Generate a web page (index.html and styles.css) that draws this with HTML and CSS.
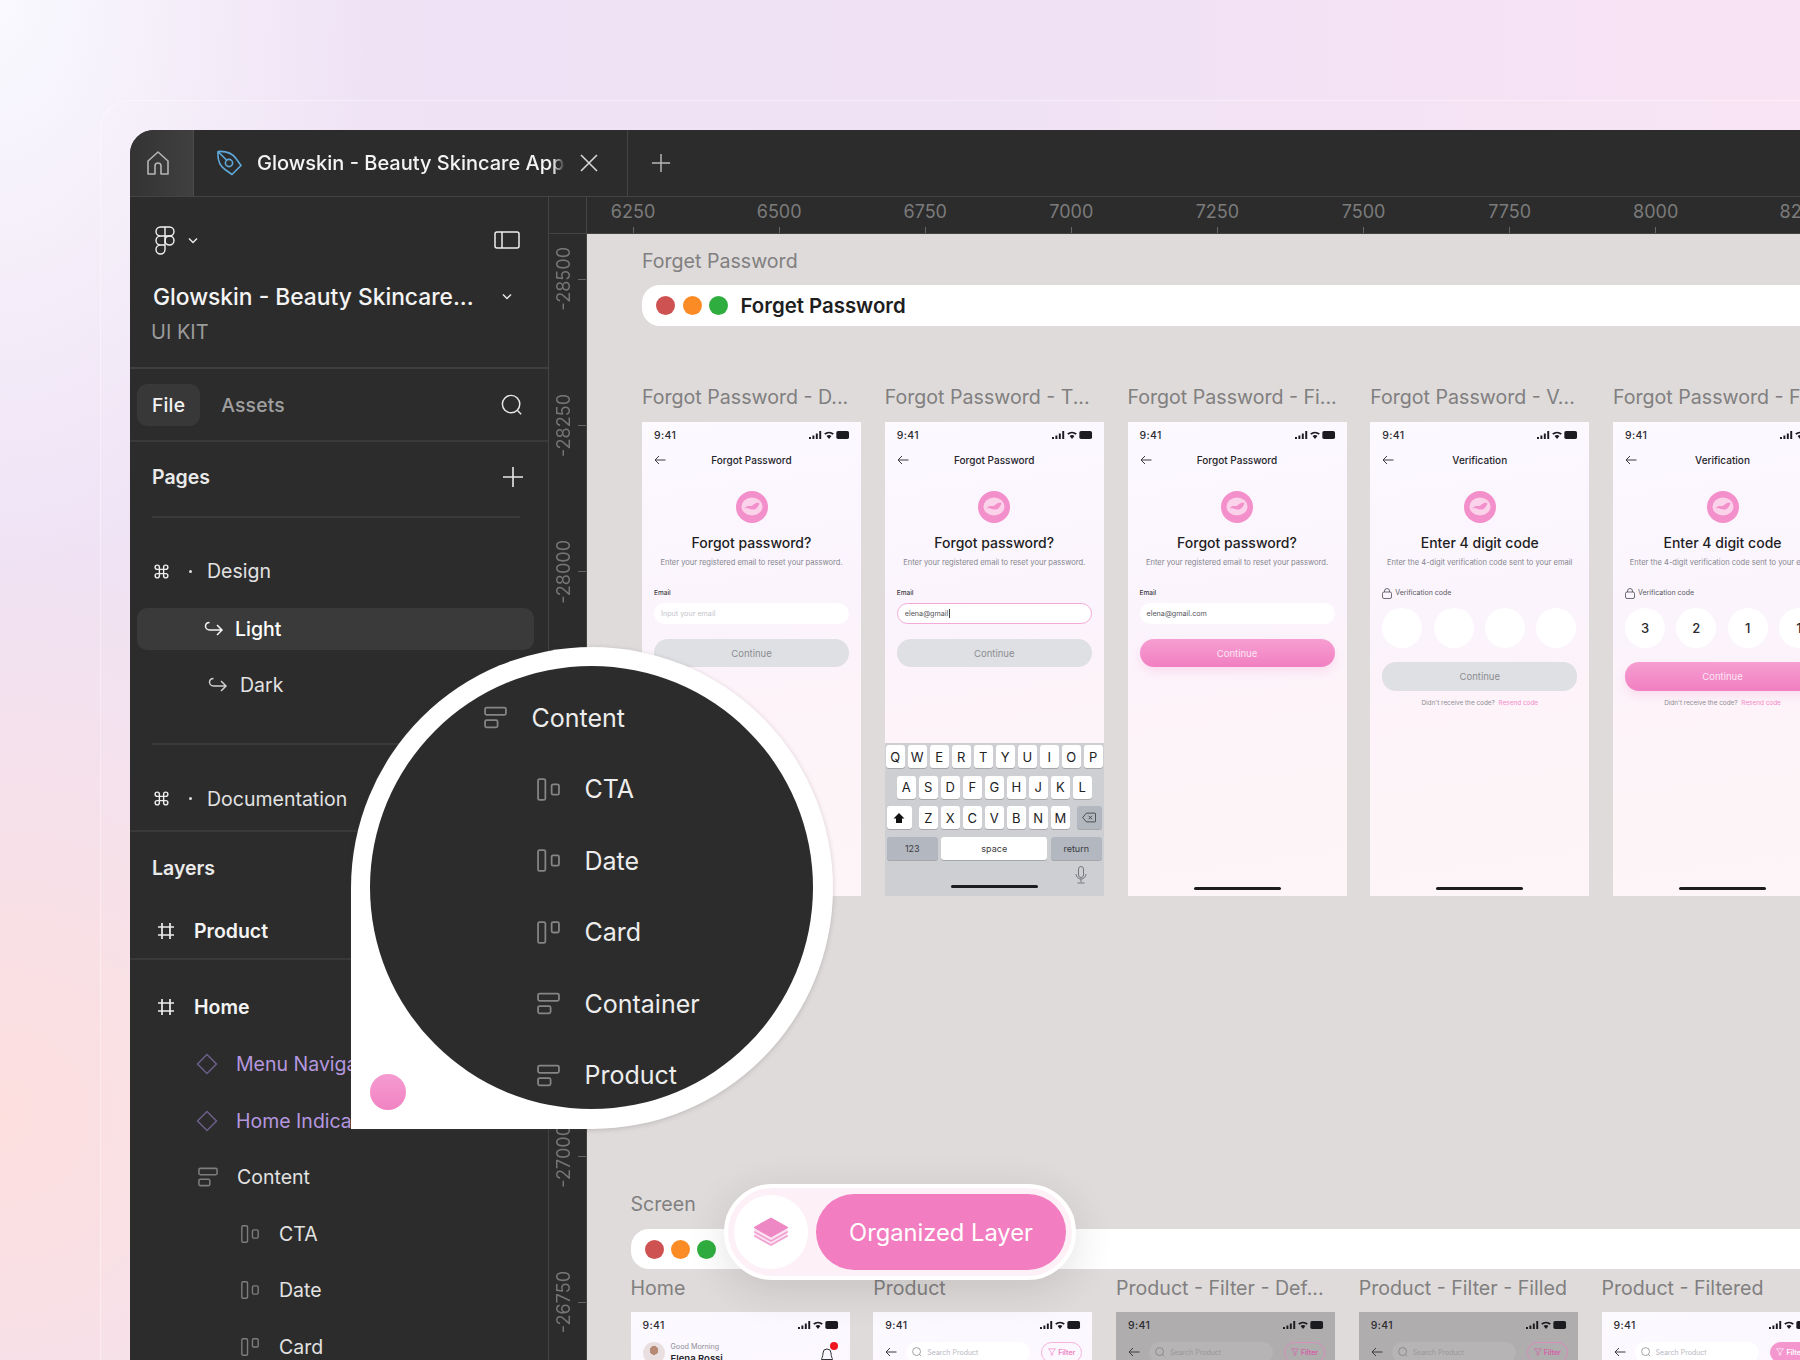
FILE: index.html
```html
<!DOCTYPE html>
<html lang="en">
<head>
<meta charset="utf-8">
<title>Glowskin - Organized Layer</title>
<link rel="stylesheet" href="styles.css">
</head>
<body>
<svg class="sprite" aria-hidden="true">
  <symbol id="i-home" viewBox="0 0 24 26"><path d="M2 11 12 2l10 9v13h-7v-8a3 3 0 0 0-6 0v8H2z" fill="none" stroke="currentColor" stroke-width="1.6" stroke-linejoin="round"/></symbol>
  <symbol id="i-pen" viewBox="0 0 26 26"><path d="M2 1.500c7-.5 14 1.500 18 7l5 7-9 9-7-5C3 15.500 1.500 8.500 2 1.500zM2 1.500l8.500 8.500" fill="none" stroke="currentColor" stroke-width="1.6" stroke-linejoin="round"/><circle cx="13" cy="13" r="3.600" fill="none" stroke="currentColor" stroke-width="1.600"/></symbol>
  <symbol id="i-figma" viewBox="0 0 20 29"><path d="M10 1H5.500a4.500 4.500 0 0 0 0 9H10zM10 1h4.500a4.500 4.500 0 0 1 0 9H10zM10 10H5.500a4.500 4.500 0 0 0 0 9H10zM10 19H5.500a4.500 4.500 0 1 0 4.500 4.500z" fill="none" stroke="currentColor" stroke-width="1.400"/><circle cx="14.500" cy="14.500" r="4.500" fill="none" stroke="currentColor" stroke-width="1.400"/></symbol>
  <symbol id="i-chev" viewBox="0 0 10 7"><path d="m1 1.500 4 4 4-4" fill="none" stroke="currentColor" stroke-width="1.500"/></symbol>
  <symbol id="i-panel" viewBox="0 0 26 18"><rect x="1" y="1" width="24" height="16" rx="2" fill="none" stroke="currentColor" stroke-width="1.500"/><path d="M8 1v16" stroke="currentColor" stroke-width="1.500"/></symbol>
  <symbol id="i-search" viewBox="0 0 24 24"><circle cx="11" cy="11" r="9.500" fill="none" stroke="currentColor" stroke-width="1.600"/><path d="m18 18 4 4" stroke="currentColor" stroke-width="1.600"/></symbol>
  <symbol id="i-plus" viewBox="0 0 22 22"><path d="M11 1v20M1 11h20" stroke="currentColor" stroke-width="1.600"/></symbol>
  <symbol id="i-x" viewBox="0 0 18 18"><path d="m1 1 16 16M17 1 1 17" stroke="currentColor" stroke-width="1.600"/></symbol>
  <symbol id="i-cmd" viewBox="0 0 24 24"><path d="M15 6v12a3 3 0 1 0 3-3H6a3 3 0 1 0 3 3V6a3 3 0 1 0-3 3h12a3 3 0 1 0-3-3" fill="none" stroke="currentColor" stroke-width="2"/></symbol>
  <symbol id="i-return" viewBox="0 0 20 16"><path d="M1.500 5a4 4 0 0 1 4-3.500M1.500 5a4 4 0 0 0 4 4H18M13 4l5 5-5 5" fill="none" stroke="currentColor" stroke-width="1.500"/></symbol>
  <symbol id="i-frame" viewBox="0 0 18 18"><path d="M5 1v16M13 1v16M1 5h16M1 13h16" stroke="currentColor" stroke-width="1.700"/></symbol>
  <symbol id="i-comp" viewBox="0 0 22 22"><path d="m11 1.500 9.500 9.500-9.500 9.500L1.500 11z" fill="none" stroke="currentColor" stroke-width="1.500"/></symbol>
  <symbol id="i-vstack" viewBox="0 0 22 22"><rect x="1" y="1.500" width="20" height="7" rx="1.500" fill="none" stroke="currentColor" stroke-width="1.700"/><rect x="1" y="13.500" width="12" height="7" rx="1.500" fill="none" stroke="currentColor" stroke-width="1.700"/></symbol>
  <symbol id="i-hcenter" viewBox="0 0 22 22"><rect x="1" y="1" width="7" height="20" rx="1.500" fill="none" stroke="currentColor" stroke-width="1.700"/><rect x="14" y="6" width="7" height="10" rx="1.500" fill="none" stroke="currentColor" stroke-width="1.700"/></symbol>
  <symbol id="i-htop" viewBox="0 0 22 22"><rect x="1" y="1" width="7" height="20" rx="1.500" fill="none" stroke="currentColor" stroke-width="1.700"/><rect x="14" y="1" width="7" height="10" rx="1.500" fill="none" stroke="currentColor" stroke-width="1.700"/></symbol>
  <symbol id="i-status" viewBox="0 0 42 10"><path d="M0 7h2v2H0zM3.500 5.500h2V9h-2zM7 3.500h2V9H7zM10.500 1h2v8h-2z" fill="currentColor"/><path d="M15.500 3.500a7.500 7.500 0 0 1 10 0l-1.300 1.300a5.600 5.600 0 0 0-7.400 0zM18 6a3.900 3.900 0 0 1 5 0l-2.500 3z" fill="currentColor"/><rect x="28" y="1" width="13" height="8" rx="1.800" fill="currentColor"/></symbol>
  <symbol id="i-back" viewBox="0 0 12 10"><path d="M11.500 5H1M5 1 1 5l4 4" fill="none" stroke="currentColor" stroke-width="1"/></symbol>
  <symbol id="i-logo" viewBox="0 0 32 32"><circle cx="16" cy="16" r="16" fill="#f38fca"/><ellipse cx="16" cy="15.500" rx="10.500" ry="9" fill="#fad3ea"/><path d="M8.500 17.500c2.500-3.500 5-2 7-2.500s3-4 8-3c-1.500 5-4.500 7-7.500 6.500s-4.500-2.500-7.500-1z" fill="#f38fca"/></symbol>
  <symbol id="i-lock" viewBox="0 0 10 11"><rect x=".5" y="4" width="9" height="6.500" rx="1.500" fill="none" stroke="currentColor" stroke-width=".8"/><path d="M2.500 4V3a2.500 2.500 0 0 1 5 0v1" fill="none" stroke="currentColor" stroke-width=".8"/></symbol>
  <symbol id="i-shift" viewBox="0 0 12 12"><path d="M6 1 .5 6.500H3V11h6V6.500h2.500z" fill="currentColor"/></symbol>
  <symbol id="i-del" viewBox="0 0 16 12"><path d="M5 1h9.500a1 1 0 0 1 1 1v8a1 1 0 0 1-1 1H5L.8 6zM7.500 4l4 4M11.500 4l-4 4" fill="none" stroke="currentColor" stroke-width=".9"/></symbol>
  <symbol id="i-mic" viewBox="0 0 12 18"><rect x="3.500" y=".5" width="5" height="11" rx="2.500" fill="none" stroke="currentColor" stroke-width=".9"/><path d="M1 8a5 5 0 0 0 10 0M6 13v3M2.500 17h7" fill="none" stroke="currentColor" stroke-width=".9"/></symbol>
  <symbol id="i-bell" viewBox="0 0 12 16"><path d="M6 1a4 4 0 0 1 4 4c0 4 1.500 5 1.500 6.500h-11C.5 10 2 9 2 5a4 4 0 0 1 4-4zM4.500 13a1.500 1.500 0 0 0 3 0" fill="none" stroke="currentColor" stroke-width="1"/></symbol>
  <symbol id="i-filter" viewBox="0 0 10 10"><path d="M.7 1h8.600L6 5.200v3.200L4 9V5.200z" fill="none" stroke="currentColor" stroke-width=".8"/></symbol>
  <symbol id="i-layers" viewBox="0 0 34 30">
    <path d="M17 10 33 19 17 28 1 19z" fill="#f2a0d0" stroke="#f2a0d0" stroke-width="2" stroke-linejoin="round"/>
    <path d="M17 8 33 17 17 26 1 17z" fill="#fbe4f1" stroke="#fbe4f1" stroke-width="2" stroke-linejoin="round"/>
    <path d="M17 6 33 15 17 24 1 15z" fill="#f2a0d0" stroke="#f2a0d0" stroke-width="2" stroke-linejoin="round"/>
    <path d="M17 4 33 13 17 22 1 13z" fill="#fbe4f1" stroke="#fbe4f1" stroke-width="2" stroke-linejoin="round"/>
    <path d="M17 1.500 33 10.500 17 19.500 1 10.500z" fill="#ee88c4" stroke="#ee88c4" stroke-width="2" stroke-linejoin="round"/>
  </symbol>
</svg>

<div class="halo">
  <main class="window">
    <header class="tabbar">
      <div class="tab-home"><svg class="ic-home"><use href="#i-home"/></svg></div>
      <div class="tab-file">
        <svg class="ic-pen"><use href="#i-pen"/></svg>
        <span class="tab-title">Glowskin - Beauty Skincare App UI KIT</span>
        <svg class="ic-x"><use href="#i-x"/></svg>
      </div>
      <svg class="ic-newtab"><use href="#i-plus"/></svg>
    </header>

    <div class="body">
      <aside class="sidebar">
        <section class="project">
          <div class="project-tools">
            <svg class="ic-figma"><use href="#i-figma"/></svg>
            <svg class="ic-chev"><use href="#i-chev"/></svg>
            <svg class="ic-panel"><use href="#i-panel"/></svg>
          </div>
          <div class="project-name">
            <span>Glowskin - Beauty Skincare...</span>
            <svg class="ic-chev"><use href="#i-chev"/></svg>
          </div>
          <div class="project-sub">UI KIT</div>
        </section>

        <nav class="file-tabs">
          <span class="file-tab is-on">File</span>
          <span class="file-tab">Assets</span>
          <svg class="ic-search"><use href="#i-search"/></svg>
        </nav>

        <div class="pages-head">
          <span class="head-text">Pages</span>
          <svg class="ic-add"><use href="#i-plus"/></svg>
        </div>

        <div class="pages">
          <div class="row page"><svg class="ic-cmd"><use href="#i-cmd"/></svg><i class="midot"></i><span>Design</span></div>
          <div class="row sub is-active"><svg class="ic-return"><use href="#i-return"/></svg><span>Light</span></div>
          <div class="row sub"><svg class="ic-return"><use href="#i-return"/></svg><span>Dark</span></div>
        </div>
        <div class="row page doc"><svg class="ic-cmd"><use href="#i-cmd"/></svg><i class="midot"></i><span>Documentation</span></div>

        <div class="layers-head"><span class="head-text">Layers</span></div>
        <div class="row layer-top rule"><svg class="ic-frame"><use href="#i-frame"/></svg><span>Product</span></div>

        <div class="tree">
          <div class="row layer-top"><svg class="ic-frame"><use href="#i-frame"/></svg><span>Home</span></div>
          <div class="row l1 comp"><svg class="ic-layer"><use href="#i-comp"/></svg><span>Menu Navigation</span></div>
          <div class="row l1 comp"><svg class="ic-layer"><use href="#i-comp"/></svg><span>Home Indicator</span></div>
          <div class="row l1"><svg class="ic-layer"><use href="#i-vstack"/></svg><span>Content</span></div>
          <div class="row l2"><svg class="ic-layer"><use href="#i-hcenter"/></svg><span>CTA</span></div>
          <div class="row l2"><svg class="ic-layer"><use href="#i-hcenter"/></svg><span>Date</span></div>
          <div class="row l2"><svg class="ic-layer"><use href="#i-htop"/></svg><span>Card</span></div>
        </div>
      </aside>

      <div class="workspace">
        <div class="ruler-corner"></div>
        <div class="ruler-h">
          <span class="rh">6250</span><span class="rh">6500</span><span class="rh">6750</span><span class="rh">7000</span><span class="rh">7250</span><span class="rh">7500</span><span class="rh">7750</span><span class="rh">8000</span><span class="rh">8250</span>
        </div>
        <div class="ruler-v">
          <div class="rv"><span>-28500</span></div><div class="rv"><span>-28250</span></div><div class="rv"><span>-28000</span></div><div class="rv"><span>-27750</span></div><div class="rv"><span>-27500</span></div><div class="rv"><span>-27250</span></div><div class="rv"><span>-27000</span></div><div class="rv"><span>-26750</span></div>
        </div>

        <div class="canvas">
          <section class="group group-a">
            <div class="canvas-label">Forget Password</div>
            <div class="banner"><i class="dot red"></i><i class="dot orange"></i><i class="dot green"></i><strong>Forget Password</strong></div>
            <div class="labels labels-a">
              <span>Forgot Password - D...</span><span>Forgot Password - T...</span><span>Forgot Password - Fi...</span><span>Forgot Password - V...</span><span>Forgot Password - F...</span>
            </div>
            <div class="frames">
              <article class="phone">
                <div class="status"><span>9:41</span><svg class="ic-status"><use href="#i-status"/></svg></div>
                <div class="nav"><svg class="ic-back"><use href="#i-back"/></svg><span>Forgot Password</span></div>
                <svg class="ic-logo"><use href="#i-logo"/></svg>
                <h2>Forgot password?</h2>
                <p class="lede">Enter your registered email to reset your password.</p>
                <div class="field-label">Email</div>
                <div class="input placeholder">Input your email</div>
                <div class="btn">Continue</div>
                <div class="homebar"></div>
              </article>

              <article class="phone">
                <div class="status"><span>9:41</span><svg class="ic-status"><use href="#i-status"/></svg></div>
                <div class="nav"><svg class="ic-back"><use href="#i-back"/></svg><span>Forgot Password</span></div>
                <svg class="ic-logo"><use href="#i-logo"/></svg>
                <h2>Forgot password?</h2>
                <p class="lede">Enter your registered email to reset your password.</p>
                <div class="field-label">Email</div>
                <div class="input focus">elena@gmail<i class="caret"></i></div>
                <div class="btn">Continue</div>
                <div class="keyboard">
                  <div class="kb-row"><b>Q</b><b>W</b><b>E</b><b>R</b><b>T</b><b>Y</b><b>U</b><b>I</b><b>O</b><b>P</b></div>
                  <div class="kb-row"><b>A</b><b>S</b><b>D</b><b>F</b><b>G</b><b>H</b><b>J</b><b>K</b><b>L</b></div>
                  <div class="kb-row kb-between">
                    <b class="k-mod light"><svg class="ic-shift"><use href="#i-shift"/></svg></b>
                    <span class="kb-letters"><b>Z</b><b>X</b><b>C</b><b>V</b><b>B</b><b>N</b><b>M</b></span>
                    <b class="k-mod"><svg class="ic-del"><use href="#i-del"/></svg></b>
                  </div>
                  <div class="kb-row kb-bottom"><b class="k-fn">123</b><b class="k-space">space</b><b class="k-fn">return</b></div>
                  <div class="kb-mic"><svg class="ic-mic"><use href="#i-mic"/></svg></div>
                  <div class="homebar"></div>
                </div>
              </article>

              <article class="phone">
                <div class="status"><span>9:41</span><svg class="ic-status"><use href="#i-status"/></svg></div>
                <div class="nav"><svg class="ic-back"><use href="#i-back"/></svg><span>Forgot Password</span></div>
                <svg class="ic-logo"><use href="#i-logo"/></svg>
                <h2>Forgot password?</h2>
                <p class="lede">Enter your registered email to reset your password.</p>
                <div class="field-label">Email</div>
                <div class="input">elena@gmail.com</div>
                <div class="btn is-on">Continue</div>
                <div class="homebar"></div>
              </article>

              <article class="phone">
                <div class="status"><span>9:41</span><svg class="ic-status"><use href="#i-status"/></svg></div>
                <div class="nav"><svg class="ic-back"><use href="#i-back"/></svg><span>Verification</span></div>
                <svg class="ic-logo"><use href="#i-logo"/></svg>
                <h2>Enter 4 digit code</h2>
                <p class="lede">Enter the 4-digit verification code sent to your email</p>
                <div class="field-label code-label"><svg class="ic-lock"><use href="#i-lock"/></svg>Verification code</div>
                <div class="code"><span></span><span></span><span></span><span></span></div>
                <div class="btn btn-code">Continue</div>
                <div class="resend">Didn't receive the code? <em>Resend code</em></div>
                <div class="homebar"></div>
              </article>

              <article class="phone">
                <div class="status"><span>9:41</span><svg class="ic-status"><use href="#i-status"/></svg></div>
                <div class="nav"><svg class="ic-back"><use href="#i-back"/></svg><span>Verification</span></div>
                <svg class="ic-logo"><use href="#i-logo"/></svg>
                <h2>Enter 4 digit code</h2>
                <p class="lede">Enter the 4-digit verification code sent to your email</p>
                <div class="field-label code-label"><svg class="ic-lock"><use href="#i-lock"/></svg>Verification code</div>
                <div class="code"><span>3</span><span>2</span><span>1</span><span>1</span></div>
                <div class="btn btn-code is-on">Continue</div>
                <div class="resend">Didn't receive the code? <em>Resend code</em></div>
                <div class="homebar"></div>
              </article>
            </div>
          </section>

          <section class="group group-b">
            <div class="canvas-label">Screen</div>
            <div class="banner banner-b"><i class="dot red"></i><i class="dot orange"></i><i class="dot green"></i></div>
            <div class="labels labels-b">
              <span>Home</span><span>Product</span><span>Product - Filter - Def...</span><span>Product - Filter - Filled</span><span>Product - Filtered</span>
            </div>
            <div class="frames">
              <article class="phone">
                <div class="status"><span>9:41</span><svg class="ic-status"><use href="#i-status"/></svg></div>
                <div class="greet">
                  <i class="avatar"></i>
                  <div class="greet-text"><small>Good Morning</small><strong>Elena Rossi</strong></div>
                  <span class="bell"><svg class="ic-bell"><use href="#i-bell"/></svg><i class="badge"></i></span>
                </div>
              </article>
              <article class="phone">
                <div class="status"><span>9:41</span><svg class="ic-status"><use href="#i-status"/></svg></div>
                <div class="searchbar">
                  <svg class="ic-back"><use href="#i-back"/></svg>
                  <div class="search"><svg class="ic-mini"><use href="#i-search"/></svg>Search Product</div>
                  <div class="filter"><svg class="ic-fil"><use href="#i-filter"/></svg>Filter</div>
                </div>
              </article>
              <article class="phone is-dim">
                <div class="status"><span>9:41</span><svg class="ic-status"><use href="#i-status"/></svg></div>
                <div class="searchbar">
                  <svg class="ic-back"><use href="#i-back"/></svg>
                  <div class="search"><svg class="ic-mini"><use href="#i-search"/></svg>Search Product</div>
                  <div class="filter"><svg class="ic-fil"><use href="#i-filter"/></svg>Filter</div>
                </div>
              </article>
              <article class="phone is-dim">
                <div class="status"><span>9:41</span><svg class="ic-status"><use href="#i-status"/></svg></div>
                <div class="searchbar">
                  <svg class="ic-back"><use href="#i-back"/></svg>
                  <div class="search"><svg class="ic-mini"><use href="#i-search"/></svg>Search Product</div>
                  <div class="filter"><svg class="ic-fil"><use href="#i-filter"/></svg>Filter</div>
                </div>
              </article>
              <article class="phone">
                <div class="status"><span>9:41</span><svg class="ic-status"><use href="#i-status"/></svg></div>
                <div class="searchbar">
                  <svg class="ic-back"><use href="#i-back"/></svg>
                  <div class="search"><svg class="ic-mini"><use href="#i-search"/></svg>Search Product</div>
                  <div class="filter is-on"><svg class="ic-fil"><use href="#i-filter"/></svg>Filter</div>
                </div>
              </article>
            </div>
          </section>
        </div>
      </div>
    </div>
  </main>
</div>

<aside class="magnifier">
  <div class="lens">
    <div class="lens-row"><svg class="ic-lens"><use href="#i-vstack"/></svg><span>Content</span></div>
    <div class="lens-row indent"><svg class="ic-lens"><use href="#i-hcenter"/></svg><span>CTA</span></div>
    <div class="lens-row indent"><svg class="ic-lens"><use href="#i-hcenter"/></svg><span>Date</span></div>
    <div class="lens-row indent"><svg class="ic-lens"><use href="#i-htop"/></svg><span>Card</span></div>
    <div class="lens-row indent"><svg class="ic-lens"><use href="#i-vstack"/></svg><span>Container</span></div>
    <div class="lens-row indent"><svg class="ic-lens"><use href="#i-vstack"/></svg><span>Product</span></div>
  </div>
  <i class="pink-dot"></i>
</aside>

<aside class="pill">
  <span class="pill-icon"><svg class="ic-stack"><use href="#i-layers"/></svg></span>
  <span class="pill-label">Organized Layer</span>
</aside>
</body>
</html>
```

FILE: styles.css
```css
* { box-sizing: border-box; }
html, body { margin: 0; height: 1360px; }
body {
  position: relative;
  overflow: hidden;
  font-family: Inter, "Liberation Sans", sans-serif;
  color: #eee;
  background:
    radial-gradient(520px 800px at 0% 0%, #f9f9fe 0%, rgba(249,249,254,0) 72%),
    radial-gradient(800px 800px at 0% 82%, #fddfde 0%, rgba(253,223,222,0) 75%),
    linear-gradient(90deg, #efe2f5 0%, #f0e1f5 55%, #f8e3f4 100%);
}
.sprite { position: absolute; width: 0; height: 0; overflow: hidden; }
svg { display: block; flex: none; }
i { display: block; flex: none; }

.halo {
  margin: 100px 0 0 100px;
  padding: 30px 0 0 30px;
  width: 1700px;
  height: 1260px;
  border-radius: 30px 0 0 0;
  border-top: 1px solid rgba(255,255,255,.35);
  border-left: 1px solid rgba(255,255,255,.35);
  background: rgba(255,255,255,.06);
}
.window {
  width: 1670px;
  height: 1230px;
  margin: -1px 0 0 -1px;
  background: #2c2c2c;
  border-radius: 24px 0 0 0;
  overflow: hidden;
  display: flex;
  flex-direction: column;
}

/* tab bar */
.tabbar {
  height: 67px;
  flex: none;
  display: flex;
  align-items: stretch;
  border-bottom: 1px solid #444;
}
.tab-home {
  width: 64px;
  display: flex;
  align-items: center;
  justify-content: center;
  background: linear-gradient(90deg, #333 0%, #404040 100%);
  border-right: 1px solid #4a4a4a;
}
.ic-home { width: 24px; height: 26px; color: #b4b4b4; margin-right: 7px; }
.tab-file {
  width: 434px;
  display: flex;
  align-items: center;
  padding-left: 22px;
  border-right: 1px solid #444;
}
.ic-pen { width: 26px; height: 26px; color: #5fa9da; }
.tab-title {
  margin-left: 15px;
  width: 308px;
  overflow: hidden;
  white-space: nowrap;
  font-size: 20px;
  font-weight: 500;
  color: #f4f4f4;
  -webkit-mask-image: linear-gradient(90deg, #000 96%, transparent 100%);
  mask-image: linear-gradient(90deg, #000 96%, transparent 100%);
}
.ic-x { width: 18px; height: 18px; color: #d8d8d8; margin-left: 15px; }
.ic-newtab { width: 20px; height: 20px; color: #b8b8b8; margin: 23px 0 0 23px; }

.body { flex: 1; min-height: 0; display: flex; }

/* sidebar */
.sidebar {
  width: 419px;
  flex: none;
  border-right: 1px solid #444;
  font-size: 19.500px;
  overflow: hidden;
}
.project {
  height: 172px;
  padding: 28px 28px 0 22px;
  border-bottom: 2px solid #3f3f3f;
}
.project-tools { display: flex; align-items: center; height: 30px; padding-left: 3px; }
.ic-figma { width: 20px; height: 29px; color: #f2f2f2; }
.ic-chev { width: 10px; height: 7px; color: #e8e8e8; margin-left: 13px; }
.ic-panel { width: 26px; height: 18px; color: #eee; margin-left: auto; }
.project-name {
  margin-top: 26px;
  height: 30px;
  padding-left: 1px;
  display: flex;
  align-items: center;
  font-size: 22.800px;
  font-weight: 500;
  color: #f4f4f4;
  white-space: nowrap;
}
.project-name .ic-chev { margin-left: 28px; }
.project-sub { margin: 9px 0 0 -1px; font-size: 20px; line-height: 24px; color: #9b9b9b; }

.file-tabs {
  height: 73px;
  display: flex;
  align-items: center;
  padding: 0 25px 0 7px;
  border-bottom: 2px solid #3a3a3a;
}
.file-tab {
  height: 42px;
  display: flex;
  align-items: center;
  padding: 0 15px;
  font-size: 19.300px;
  font-weight: 500;
  letter-spacing: .2px;
  color: #a0a0a0;
  border-radius: 10px;
}
.file-tab.is-on { background: #383838; color: #f2f2f2; margin-right: 6px; }
.ic-search { width: 22px; height: 22px; color: #e8e8e8; margin-left: auto; flex: none; }
.ic-add { width: 22px; height: 22px; color: #e8e8e8; margin: 0 -4px 0 auto; flex: none; }

.pages-head {
  height: 76px;
  padding-bottom: 4px;
  display: flex;
  align-items: center;
  margin: 0 28px 0 22px;
  border-bottom: 2px solid #3a3a3a;
}
.head-text { font-size: 19.500px; font-weight: 600; color: #eaeaea; }

.pages {
  margin: 0 28px 0 22px;
  padding: 25px 0 29px;
  border-bottom: 2px solid #3a3a3a;
}
.row {
  height: 56.800px;
  display: flex;
  align-items: center;
  font-size: 19.500px;
  color: #e2e2e2;
  white-space: nowrap;
}
.page { padding-left: 1px; }
.ic-cmd { width: 17px; height: 17px; color: #eee; }
.midot { width: 3px; height: 3px; border-radius: 50%; background: #ddd; margin: 0 15px 0 19px; }
.doc { margin: 26px 0 0 22px; }
.sub { padding-left: 56px; }
.sub .ic-return { width: 20px; height: 16px; color: #d0d0d0; margin-right: 12px; }
.is-active {
  height: 42px;
  margin: 8px 0 7px -15px;
  width: 397px;
  padding-left: 67px;
  background: #3a3a3a;
  border-radius: 10px;
  color: #fff;
  font-weight: 500;
}
.is-active .ic-return { color: #f4f4f4; }
.is-active .ic-return { margin-right: 11px; }
.layers-head {
  height: 73px;
  display: flex;
  align-items: center;
  padding: 1px 0 0 22px;
  border-top: 2px solid #3a3a3a;
  margin-top: 3px;
}
.layer-top { padding-left: 27px; font-weight: 600; color: #f4f4f4; }
.ic-frame { width: 18px; height: 18px; color: #eee; margin-right: 19px; }
.rule { border-bottom: 2px solid #3a3a3a; }
.tree { padding-top: 19px; }
.tree .row { height: 56.600px; }
.l1 { padding-left: 68px; }
.l2 { padding-left: 111px; }
.ic-layer { width: 20px; height: 20px; color: #7d7d7d; margin-right: 19px; }
.l2 .ic-layer { width: 18px; height: 18px; margin-right: 20px; }
.comp { color: #b497df; padding-left: 67px; }
.comp .ic-layer { width: 22px; height: 22px; color: #6c5f8a; margin: 0 18px 0 -1px; }

/* workspace + rulers */
.workspace {
  flex: 1;
  min-width: 0;
  display: grid;
  grid-template-columns: 38px 1fr;
  grid-template-rows: 37px 1fr;
}
.ruler-corner { border-right: 1px solid #444; border-bottom: 1px solid #444; }
.ruler-h {
  display: flex;
  overflow: hidden;
  border-bottom: 1px solid #444;
}
.rh {
  flex: none;
  width: 146.100px;
  height: 36px;
  display: flex;
  flex-direction: column;
  align-items: center;
  justify-content: flex-end;
  gap: 4px;
  font-size: 18px;
  line-height: 22px;
  color: #7b7b7b;
}
.rh:first-child { margin-left: -27px; }
.rh::after { content: ""; width: 1px; height: 6px; background: #666; }
.ruler-v {
  overflow: hidden;
  border-right: 1px solid #444;
}
.rv {
  height: 146.200px;
  display: flex;
  align-items: center;
  justify-content: flex-end;
  gap: 3px;
  color: #757575;
  font-size: 18px;
}
.rv:first-child { margin-top: -28px; }
.rv span { writing-mode: vertical-rl; transform: rotate(180deg); line-height: 22px; }
.rv::after { content: ""; width: 8px; height: 1px; background: #666; flex: none; }

/* canvas */
.canvas { background: #dedbda; overflow: hidden; min-width: 0; }
.group { color: #222; }
.group-a { margin-left: 55px; padding-top: 17px; }
.group-b { margin-left: 43.500px; margin-top: 298px; }
.canvas-label { height: 20px; font-size: 19.600px; line-height: 20px; color: #817f7f; }
.banner {
  margin-top: 14px;
  height: 41px;
  width: 1300px;
  background: #fff;
  border-radius: 18px 0 0 18px;
  display: flex;
  align-items: center;
  padding-left: 14px;
  gap: 7.500px;
}
.banner-b { height: 40px; margin-top: 15px; gap: 7px; }
.banner strong { font-size: 20.400px; font-weight: 600; color: #1e1e1e; margin-left: 5px; }
.dot { width: 19px; height: 19px; border-radius: 50%; }
.red { background: #cf5252; }
.orange { background: #fb8b24; }
.green { background: #2fae3f; }

.labels {
  display: flex;
  gap: 23.750px;
  font-size: 19.600px;
  line-height: 20px;
  color: #817f7f;
  white-space: nowrap;
}
.labels span { flex: none; width: 219px; }
.labels-a { margin-top: 61px; }
.labels-b { margin-top: 9px; }
.frames { display: flex; gap: 23.750px; margin-top: 15px; }
.labels-b + .frames { margin-top: 14px; }

/* phone frames */
.phone {
  flex: none;
  width: 219px;
  height: 474px;
  display: flex;
  flex-direction: column;
  align-items: stretch;
  color: #24242a;
  background: linear-gradient(172deg, #fcf9ff 0%, #fbf4fd 38%, #fdf3f9 58%, #fdf5f7 100%);
}
.status {
  margin-top: 6px;
  height: 14px;
  padding: 0 11px 0 12px;
  display: flex;
  align-items: center;
  justify-content: space-between;
  font-size: 10.500px;
  font-weight: 500;
  letter-spacing: .4px;
  color: #2b2b30;
}
.ic-status { width: 41px; height: 10px; color: #1c1c20; }
.nav {
  margin-top: 11px;
  height: 14px;
  padding: 0 12px;
  display: grid;
  grid-template-columns: 12px 1fr 12px;
  align-items: center;
  font-size: 10px;
  font-weight: 500;
  text-align: center;
}
.ic-back { width: 12px; height: 10px; color: #3a3a3f; }
.ic-logo { width: 32px; height: 32px; margin: 24px auto 0; }
.phone h2 {
  margin: 10px 0 0;
  height: 20px;
  font-size: 14px;
  line-height: 20px;
  font-weight: 500;
  text-align: center;
  color: #1e1e23;
}
.lede {
  margin: 5px 0 0;
  height: 10px;
  font-size: 7.550px;
  line-height: 10px;
  text-align: center;
  color: #85858c;
  white-space: nowrap;
  overflow: hidden;
}
.field-label {
  margin: 20px 12px 0;
  height: 10px;
  font-size: 6.500px;
  line-height: 10px;
  font-weight: 500;
  color: #3a3a40;
}
.input {
  margin: 5px 12px 0;
  height: 21px;
  background: #fff;
  border-radius: 11px;
  padding: 0 7px;
  display: flex;
  align-items: center;
  font-size: 7.200px;
  color: #55555b;
}
.placeholder { color: #c4c4ca; }
.focus { border: 1px solid #f5a9d8; }
.caret { width: 1px; height: 9px; background: #444; margin-left: 1px; }
.btn {
  margin: 15px 12px 0;
  height: 28px;
  border-radius: 14px;
  background: #dfe0e3;
  display: flex;
  align-items: center;
  justify-content: center;
  font-size: 9.500px;
  color: #8b8d92;
}
.btn.is-on {
  background: linear-gradient(180deg, #f69ed2 0%, #f17fc1 100%);
  color: #fde7f4;
  box-shadow: 0 5px 10px rgba(241,127,193,.18);
}
.btn-code { margin-top: 14px; height: 29px; }
.homebar {
  margin: auto auto 6px;
  width: 87px;
  height: 3px;
  border-radius: 2px;
  background: #1d1d1f;
  flex: none;
}
.code-label { display: flex; align-items: center; gap: 3px; font-weight: 400; font-size: 7px; color: #5a5a60; }
.ic-lock { width: 10px; height: 11px; color: #4a4a50; }
.code { margin: 10px 12px 0; display: flex; justify-content: space-between; width: 194px; }
.code span {
  flex: none;
  width: 40px;
  height: 40px;
  border-radius: 50%;
  background: #fff;
  display: flex;
  align-items: center;
  justify-content: center;
  font-size: 13px;
  font-weight: 500;
  color: #2b2b30;
}
.resend { margin-top: 7px; height: 10px; font-size: 6.400px; line-height: 10px; text-align: center; color: #8f8f95; }
.resend em { font-style: normal; color: #f48ac6; margin-left: 2px; }

/* keyboard */
.keyboard {
  margin-top: auto;
  height: 153px;
  padding: 2px 2px 0;
  background: #cdcfd3;
  display: flex;
  flex-direction: column;
  gap: 7.500px;
}
.kb-row, .kb-letters { display: flex; justify-content: center; gap: 3px; }
.kb-row { height: 23px; flex: none; }
.kb-row b, .k-mod {
  flex: none;
  width: 19px;
  height: 23px;
  background: #fff;
  border-radius: 3px;
  box-shadow: 0 1px 0 #a5a7ab;
  display: flex;
  align-items: center;
  justify-content: center;
  font-weight: 400;
  font-size: 13px;
  color: #222;
}
.kb-between { justify-content: space-between; }
.kb-row b.k-mod { width: 25px; background: #b2b7c0; color: #333; }
.kb-row b.k-mod.light { background: #fff; color: #111; }
.ic-shift { width: 12px; height: 12px; }
.ic-del { width: 14px; height: 11px; }
.kb-bottom { justify-content: space-between; }
.kb-row b.k-fn { width: 51px; background: #b2b7c0; font-size: 9px; color: #3b3b40; }
.kb-row b.k-space { width: 106px; font-size: 9px; color: #3b3b40; }
.kb-mic { height: 18px; margin-top: -1px; padding-right: 15px; display: flex; justify-content: flex-end; flex: none; }
.ic-mic { width: 12px; height: 18px; color: #6a6c72; }
.keyboard .homebar { margin: -7px auto 0; }

/* second row */
.greet { display: flex; align-items: flex-start; padding: 10px 12px 0; }
.avatar {
  width: 22px;
  height: 22px;
  border-radius: 50%;
  background: radial-gradient(circle at 50% 38%, #b68a74 0 24%, #e9dee0 26% 100%);
}
.greet-text { margin-left: 6px; display: flex; flex-direction: column; }
.greet-text small { font-size: 7.200px; line-height: 10px; color: #8e8e94; }
.greet-text strong { font-size: 9.500px; line-height: 13px; font-weight: 600; }
.bell { margin: 6px 5px 0 auto; position: relative; }
.ic-bell { width: 12px; height: 16px; color: #333; }
.badge { position: absolute; top: -6px; right: -5px; width: 8px; height: 8px; border-radius: 50%; background: #f0141e; }
.searchbar { display: flex; align-items: center; padding: 0 10px 0 12px; height: 22px; margin-top: 9px; }
.search {
  margin-left: 9px;
  width: 124px;
  height: 21px;
  border-radius: 11px;
  background: #fff;
  display: flex;
  align-items: center;
  gap: 5px;
  padding-left: 6px;
  font-size: 7px;
  color: #b8b8bf;
  white-space: nowrap;
}
.ic-mini { width: 10px; height: 10px; color: #777; }
.filter {
  margin-left: auto;
  width: 41px;
  height: 21px;
  border-radius: 11px;
  border: 1px solid #f5b3da;
  display: flex;
  align-items: center;
  justify-content: center;
  gap: 2px;
  font-size: 7px;
  font-weight: 600;
  color: #ef7fc0;
}
.ic-fil { width: 8px; height: 8px; }
.filter.is-on { background: #f497cf; color: #fff; border-color: #f497cf; }
.is-dim { background: #b0adae; }
.is-dim .search { background: #b6b4b5; color: #9a9899; }
.is-dim .filter { border-color: #d88dbb; color: #d65ea8; }

/* overlays */
.magnifier {
  position: absolute;
  left: 351px;
  top: 647px;
  width: 482px;
  height: 482px;
  background: #fff;
  border-radius: 50% 50% 50% 0;
  box-shadow: 0 1px 5px rgba(80,60,70,.22);
  padding: 19px;
}
.lens {
  width: 443px;
  height: 443px;
  border-radius: 50%;
  background: #2c2c2c;
  overflow: hidden;
  padding: 16px 0 0 114px;
}
.lens-row {
  height: 71.500px;
  display: flex;
  align-items: center;
  gap: 24.500px;
  font-size: 25px;
  color: #ededed;
  white-space: nowrap;
}
.indent { margin-left: 53px; }
.ic-lens { width: 23px; height: 23px; color: #858585; flex: none; }
.pink-dot {
  position: absolute;
  left: 19px;
  top: 427px;
  width: 36px;
  height: 36px;
  border-radius: 50%;
  background: linear-gradient(180deg, #f59bd1, #f183c3);
}
.pill {
  position: absolute;
  left: 724px;
  top: 1184px;
  width: 352px;
  height: 96px;
  border-radius: 48px;
  background: #fdf0f7;
  border: 4px solid #fff;
  box-shadow: 0 10px 40px rgba(60,50,50,.14);
  display: flex;
  align-items: center;
  padding: 0 6px;
  gap: 8px;
}
.pill-icon {
  width: 74px;
  height: 74px;
  border-radius: 50%;
  background: #fff;
  flex: none;
  display: flex;
  align-items: center;
  justify-content: center;
}
.ic-stack { width: 34px; height: 30px; }
.pill-label {
  flex: 1;
  height: 76px;
  border-radius: 38px;
  background: #f27dc1;
  color: #fff;
  font-size: 23.700px;
  display: flex;
  align-items: center;
  justify-content: center;
  white-space: nowrap;
}
```
